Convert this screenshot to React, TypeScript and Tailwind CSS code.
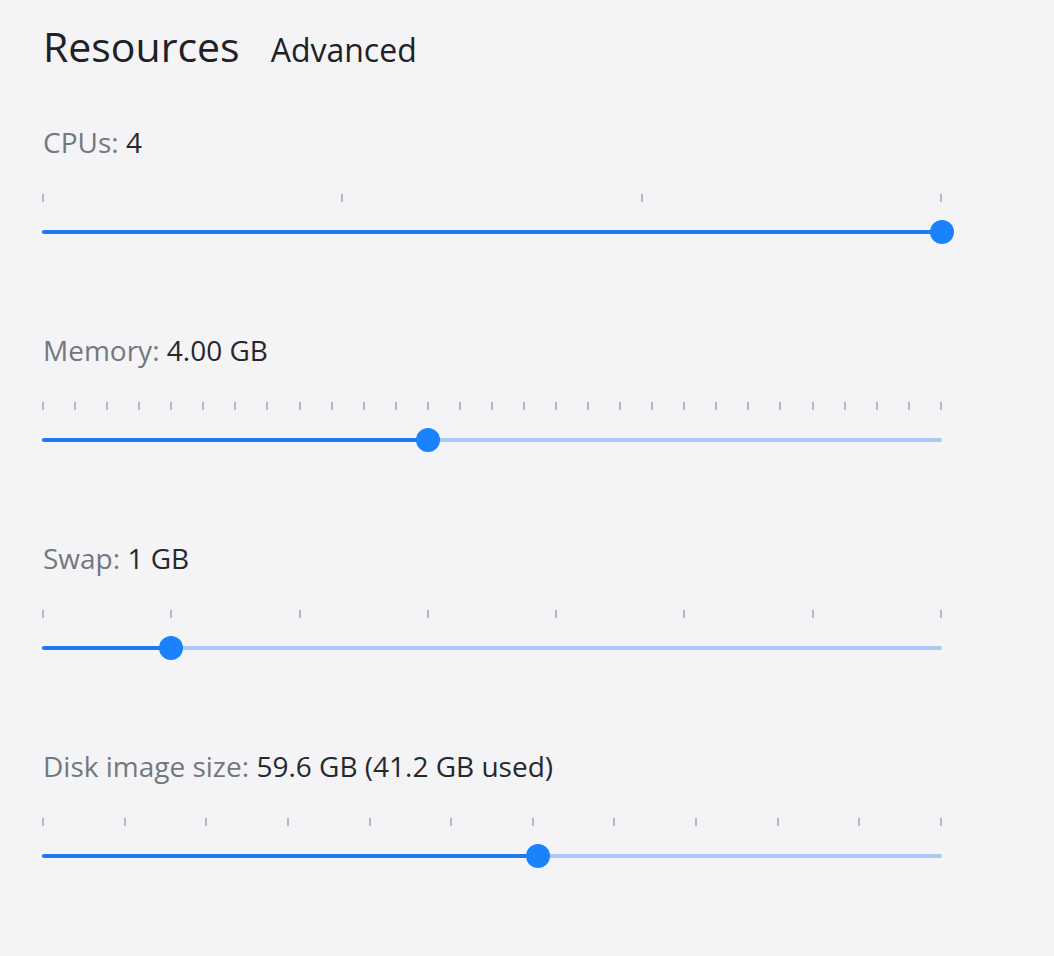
import React from "react";

type SliderProps = {
  label: string;
  value: string;
  ticks: number;
  frac: number;
};

function Slider({ label, value, ticks, frac }: SliderProps) {
  const items = Array.from({ length: ticks });
  return (
    <div className="flex flex-col">
      <div className="h-[36px] text-[28px] leading-[36px] pl-[1px] whitespace-nowrap">
        <span className="text-[#73787e]">{label}: </span>
        <span className="text-[#25282c]">{value}</span>
      </div>
      <div className="mt-[34px] flex w-[900px] justify-between">
        {items.map((_, i) => (
          <div key={i} className="h-[8px] w-[2px] bg-[#b9b9bd]" />
        ))}
      </div>
      <div className="relative mt-[28px] h-[4px] w-[900px] rounded-full bg-[#a6c9f3]">
        <div
          className="absolute left-0 top-0 h-[4px] rounded-full bg-[#1c7ce8]"
          style={{ width: `${frac * 900}px` }}
        />
        <div
          className="absolute top-[-10px] h-[24px] w-[24px] rounded-full bg-[#1a83fc]"
          style={{ left: `${frac * 900 - 12}px` }}
        />
      </div>
    </div>
  );
}

export default function App() {
  return (
    <div
      className="min-h-screen w-full bg-[#f4f4f6] pl-[42px] pt-[26px]"
      style={{ fontFamily: '"Open Sans", "Noto Sans", sans-serif' }}
    >
      <div className="flex h-[40px] items-baseline gap-[31px] pl-[1px]">
        <div className="text-[41px] leading-[40px] text-[#1f2124]">Resources</div>
        <div className="text-[32px] leading-[40px] text-[#1f2124]">Advanced</div>
      </div>
      <div className="mt-[58px] flex flex-col gap-[98px]">
        <Slider label="CPUs" value="4" ticks={4} frac={1} />
        <Slider label="Memory" value="4.00 GB" ticks={29} frac={12 / 28} />
        <Slider label="Swap" value="1 GB" ticks={8} frac={1 / 7} />
        <Slider label="Disk image size" value="59.6 GB (41.2 GB used)" ticks={12} frac={0.551} />
      </div>
    </div>
  );
}
